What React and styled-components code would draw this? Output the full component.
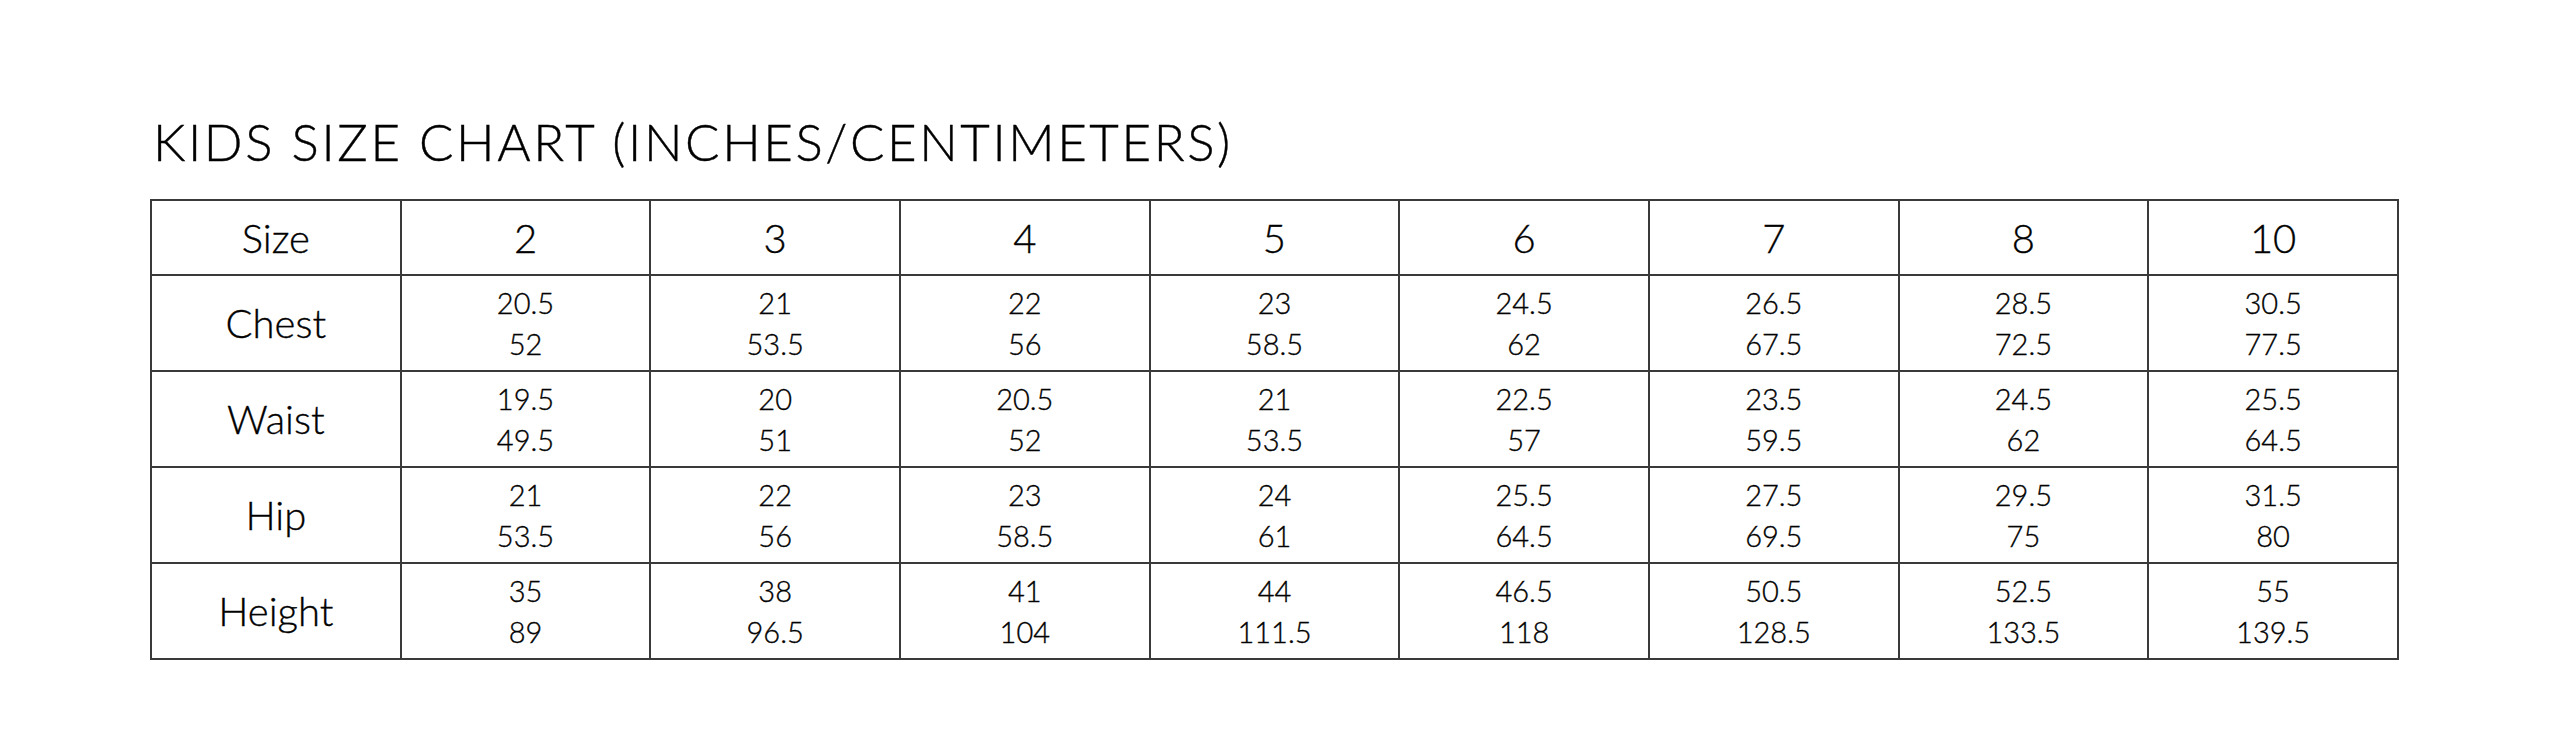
import React from "react"
import styled, { createGlobalStyle } from "styled-components"

const GlobalStyle = createGlobalStyle`
  html, body {
    margin: 0;
    padding: 0;
    background: #ffffff;
  }
  body {
    font-family: Lato, "Liberation Sans", sans-serif;
    color: #111111;
  }
`

const sizes = ["2", "3", "4", "5", "6", "7", "8", "10"]

const rows = [
  {
    label: "Chest",
    values: [["20.5", "52"], ["21", "53.5"], ["22", "56"], ["23", "58.5"], ["24.5", "62"], ["26.5", "67.5"], ["28.5", "72.5"], ["30.5", "77.5"]],
  },
  {
    label: "Waist",
    values: [["19.5", "49.5"], ["20", "51"], ["20.5", "52"], ["21", "53.5"], ["22.5", "57"], ["23.5", "59.5"], ["24.5", "62"], ["25.5", "64.5"]],
  },
  {
    label: "Hip",
    values: [["21", "53.5"], ["22", "56"], ["23", "58.5"], ["24", "61"], ["25.5", "64.5"], ["27.5", "69.5"], ["29.5", "75"], ["31.5", "80"]],
  },
  {
    label: "Height",
    values: [["35", "89"], ["38", "96.5"], ["41", "104"], ["44", "111.5"], ["46.5", "118"], ["50.5", "128.5"], ["52.5", "133.5"], ["55", "139.5"]],
  },
]

const App = () => {
  return (
    <Page>
      <GlobalStyle />
      <Title>KIDS SIZE CHART (INCHES/CENTIMETERS)</Title>
      <Chart>
        <thead>
          <tr>
            <HeadCell>Size</HeadCell>
            {sizes.map(s => (
              <HeadCell key={s}>{s}</HeadCell>
            ))}
          </tr>
        </thead>
        <tbody>
          {rows.map(r => (
            <BodyRow key={r.label}>
              <LabelCell>{r.label}</LabelCell>
              {r.values.map((v, i) => (
                <ValueCell key={i}>
                  <Line>{v[0]}</Line>
                  <Line>{v[1]}</Line>
                </ValueCell>
              ))}
            </BodyRow>
          ))}
        </tbody>
      </Chart>
    </Page>
  )
}

export default App

const Page = styled.div`
  padding: 112px 150px 80px 150px;
  display: flex;
  flex-direction: column;
  align-items: flex-start;
`
const Title = styled.h1`
  margin: 0 0 0 3px;
  font-family: Lato, "Liberation Sans", sans-serif;
  font-weight: 300;
  font-size: 51px;
  line-height: 60px;
  letter-spacing: 2.6px;
  color: #000000;
  -webkit-text-stroke: 0.4px #000000;
`
const Chart = styled.table`
  margin-top: 27px;
  border-collapse: collapse;
  table-layout: fixed;
  width: 2249px;
  td,
  th {
    border: 2px solid #3a3a3a;
    text-align: center;
    vertical-align: middle;
    padding: 0;
    font-weight: 300;
    color: #000000;
    -webkit-text-stroke: 0.35px #000000;
  }
`
const HeadCell = styled.th`
  height: 73px;
  font-size: 40px;
`
const BodyRow = styled.tr`
  height: 96px;
`
const LabelCell = styled.td`
  font-size: 40px;
`
const ValueCell = styled.td`
  font-size: 29px;
  line-height: 41.5px;
`
const Line = styled.div`
  display: block;
`
